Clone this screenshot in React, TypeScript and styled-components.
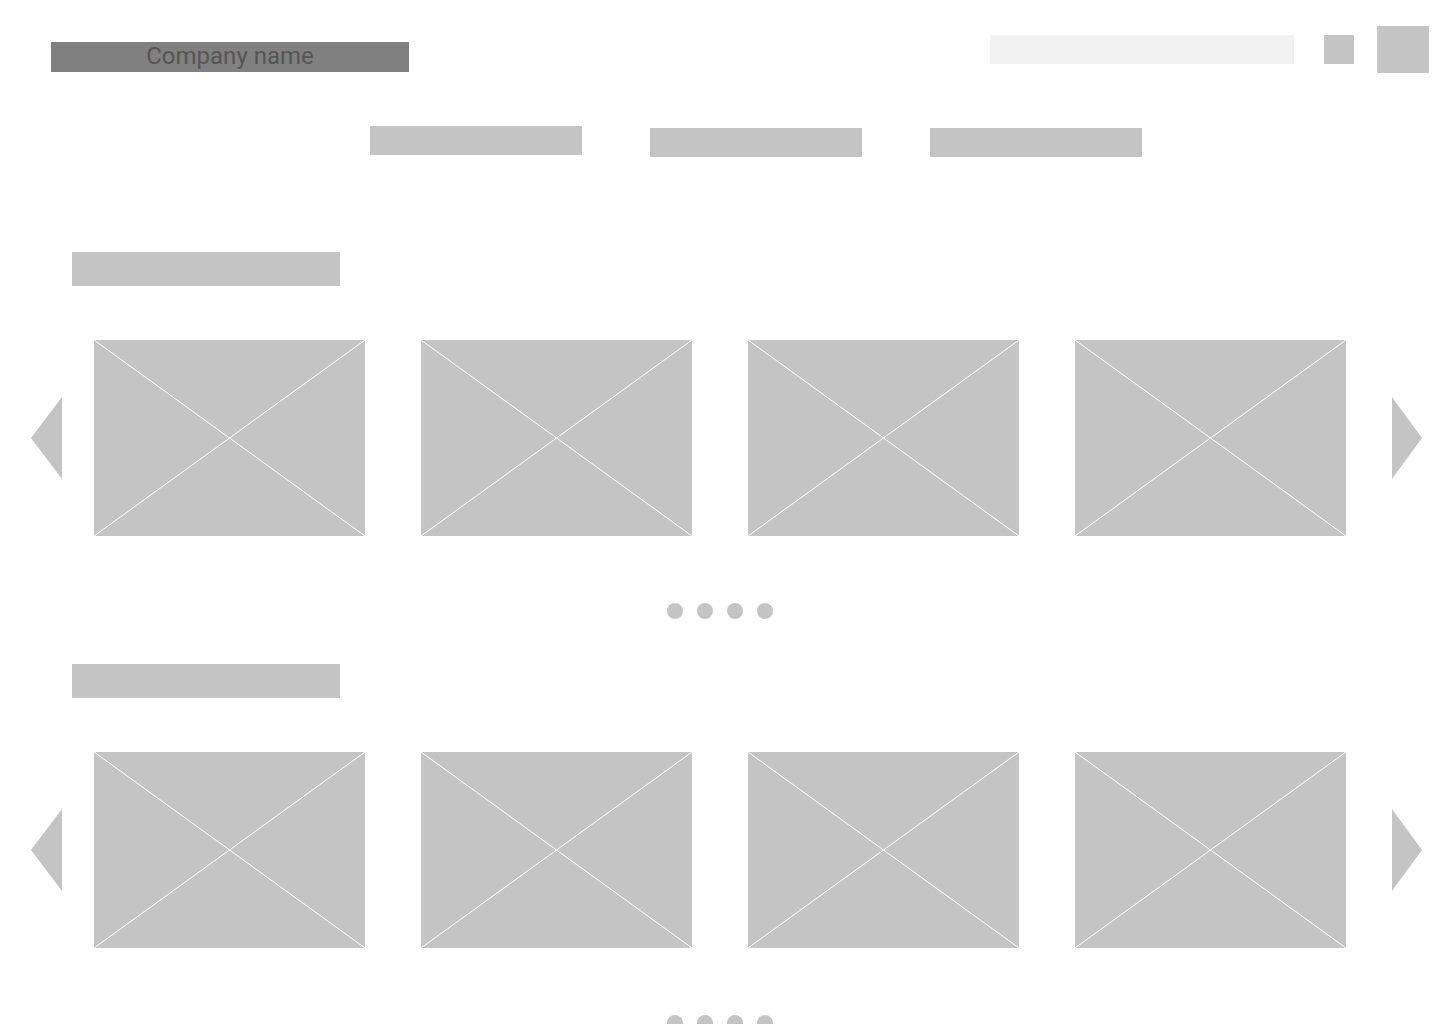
import { createGlobalStyle, styled } from 'styled-components'

const GlobalStyle = createGlobalStyle`
  body {
    margin: 0;
    background: #ffffff;
    font-family: Roboto, "Liberation Sans", sans-serif;
  }
`

const Page = styled.div`
  width: 1440px;
  height: 1024px;
  overflow: hidden;
  background: #ffffff;
`

const Header = styled.header`
  display: flex;
  justify-content: space-between;
  align-items: flex-start;
  padding: 26px 11px 0 51px;
`

const Logo = styled.div`
  width: 358px;
  height: 30px;
  margin-top: 16px;
  background: #808080;
  color: #555555;
  font-size: 24px;
  line-height: 28px;
  text-align: center;
`

const Tools = styled.div`
  display: flex;
  align-items: center;
`

const Search = styled.div`
  width: 304px;
  height: 29px;
  background: #f2f2f2;
  margin-right: 30px;
`

const IconBox = styled.div<{ $size: number; $h: number }>`
  width: ${(p) => p.$size}px;
  height: ${(p) => p.$h}px;
  background: #c4c4c4;
`

const Nav = styled.nav`
  display: flex;
  align-items: flex-start;
  gap: 68px;
  padding-left: 370px;
  margin-top: 53px;
`

const NavItem = styled.div<{ $raised?: boolean }>`
  width: 212px;
  height: 29px;
  background: #c4c4c4;
  margin-top: ${(p) => (p.$raised ? 0 : 2)}px;
`

const Section = styled.section`
  margin-top: 95px;
  & + & {
    margin-top: 45px;
  }
`

const SectionTitle = styled.div`
  width: 268px;
  height: 34px;
  margin-left: 72px;
  background: #c4c4c4;
`

const Carousel = styled.div`
  display: flex;
  align-items: center;
  padding-left: 31px;
  margin-top: 54px;
`

const Arrow = styled.div<{ $dir: 'left' | 'right' }>`
  width: 0;
  height: 0;
  border-top: 41.5px solid transparent;
  border-bottom: 41.5px solid transparent;
  ${(p) =>
    p.$dir === 'left'
      ? 'border-right: 31px solid #c4c4c4; margin-right: 32px;'
      : 'border-left: 30px solid #c4c4c4; margin-left: 46px;'}
`

const Cards = styled.div`
  display: flex;
  gap: 56px;
`

const Card = styled.div`
  width: 271px;
  height: 196px;
  background: #c4c4c4;

  svg {
    display: block;
    width: 100%;
    height: 100%;
  }
`

const Dots = styled.div`
  display: flex;
  justify-content: center;
  gap: 14px;
  margin-top: 67px;
`

const Dot = styled.span`
  width: 16px;
  height: 16px;
  border-radius: 50%;
  background: #c4c4c4;
`

const Placeholder = () => (
  <Card>
    <svg viewBox="0 0 271 196" preserveAspectRatio="none">
      <line x1="0" y1="0" x2="271" y2="196" stroke="#ffffff" strokeWidth="1" />
      <line x1="271" y1="0" x2="0" y2="196" stroke="#ffffff" strokeWidth="1" />
    </svg>
  </Card>
)

const Slider = () => (
  <Section>
    <SectionTitle />
    <Carousel>
      <Arrow $dir="left" />
      <Cards>
        {[0, 1, 2, 3].map((i) => (
          <Placeholder key={i} />
        ))}
      </Cards>
      <Arrow $dir="right" />
    </Carousel>
    <Dots>
      {[0, 1, 2, 3].map((i) => (
        <Dot key={i} />
      ))}
    </Dots>
  </Section>
)

const App = () => {
  return (
    <Page>
      <GlobalStyle />
      <Header>
        <Logo>Company name</Logo>
        <Tools>
          <Search />
          <IconBox $size={30} $h={29} />
          <IconBox $size={52} $h={47} style={{ marginLeft: 23 }} />
        </Tools>
      </Header>
      <Nav>
        <NavItem $raised />
        <NavItem />
        <NavItem />
      </Nav>
      <Slider />
      <Slider />
    </Page>
  )
}

export default App
